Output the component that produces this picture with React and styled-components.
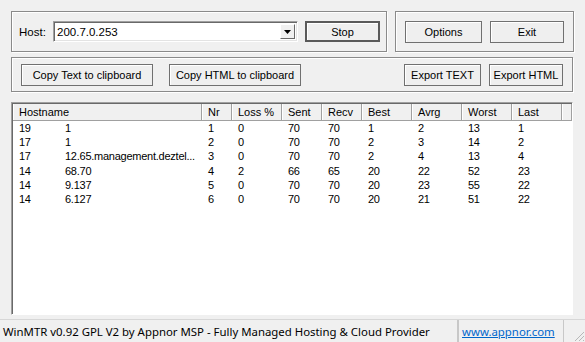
import styled, { createGlobalStyle } from "styled-components";

const GlobalStyle = createGlobalStyle`
	html, body {
		margin: 0;
		padding: 0;
		background: #f0f0f0;
	}
`;

const Window = styled.div`
	width: 585px;
	height: 342px;
	background: #f0f0f0;
	font-family: "Liberation Sans", Arial, sans-serif;
	font-size: 11px;
	color: #000;
	display: flex;
	flex-direction: column;
	overflow: hidden;
`;

const TopRow = styled.div`
	display: flex;
	gap: 8px;
	padding: 11px 11px 0 11px;
`;

const GroupBox = styled.div`
	box-sizing: border-box;
	width: ${(p) => p.$width}px;
	height: ${(p) => p.$height}px;
	border: 1px solid #8a8a8a;
	box-shadow: inset 1px 1px 0 #fff, 1px 1px 0 #fff;
	display: flex;
	align-items: center;
	padding: 0 ${(p) => p.$padRight ?? 9}px 0 ${(p) => p.$padLeft ?? 9}px;
	gap: ${(p) => p.$gap ?? 8}px;
	margin: ${(p) => p.$margin || "0"};
`;

const ButtonGroup = styled.div`
	display: flex;
	gap: 8px;
`;

const Label = styled.span`
	width: 34px;
	flex: none;
	font-size: 11.5px;
`;

const Combo = styled.div`
	box-sizing: border-box;
	width: 245px;
	height: 21px;
	flex: none;
	background: #fff;
	border-top: 1px solid #a0a0a0;
	border-left: 1px solid #a0a0a0;
	border-right: 1px solid #fff;
	border-bottom: 1px solid #fff;
	box-shadow: inset 1px 1px 0 #696969, inset -1px -1px 0 #e3e3e3;
	display: flex;
	align-items: center;
	padding: 0 2px 0 3px;
	margin-right: 7px;
`;

const ComboText = styled.span`
	flex: 1;
	font-size: 11.5px;
`;

const ArrowButton = styled.div`
	box-sizing: border-box;
	width: 15px;
	height: 15px;
	background: #f0f0f0;
	border-top: 1px solid #fff;
	border-left: 1px solid #fff;
	border-right: 1px solid #696969;
	border-bottom: 1px solid #696969;
	display: flex;
	align-items: center;
	justify-content: center;
`;

const Button = styled.button`
	box-sizing: border-box;
	width: ${(p) => p.$width}px;
	height: ${(p) => p.$height || 22}px;
	flex: none;
	padding: 0;
	margin: 0;
	background: #efefef;
	border: ${(p) => (p.$default ? "2px solid #5a5a5a" : "1px solid #707070")};
	box-shadow: inset 1px 1px 0 #fff;
	font-family: "Liberation Sans", Arial, sans-serif;
	font-size: 11px;
	color: #000;
	display: flex;
	align-items: center;
	justify-content: center;
`;

const Spacer = styled.div`
	flex: 1;
`;

const ListView = styled.div`
	box-sizing: border-box;
	width: 562px;
	height: 213px;
	margin: 10px 0 0 11px;
	background: #fff;
	border-top: 1px solid #a0a0a0;
	border-left: 1px solid #a0a0a0;
	border-right: 1px solid #fff;
	border-bottom: 1px solid #fff;
	box-shadow: inset 1px 1px 0 #696969;
	padding: 1px 0 0 1px;
`;

const HeaderRow = styled.div`
	display: flex;
	height: 17px;
`;

const HeaderCell = styled.div`
	box-sizing: border-box;
	width: ${(p) => p.$width}px;
	flex: ${(p) => (p.$fill ? 1 : "none")};
	height: 17px;
	background: #f0f0f0;
	border-right: 1px solid #a0a0a0;
	border-bottom: 1px solid #a0a0a0;
	box-shadow: inset 1px 0 0 #fff;
	padding-left: 6px;
	display: flex;
	align-items: center;
	font-size: 11px;
`;

const Row = styled.div`
	display: flex;
	height: 14.2px;
	align-items: center;
`;

const Cell = styled.div`
	box-sizing: border-box;
	width: ${(p) => p.$width}px;
	flex: none;
	padding-left: 6px;
	white-space: nowrap;
	overflow: hidden;
	font-size: 11px;
	letter-spacing: -0.25px;
	display: flex;
`;

const HostPrefix = styled.span`
	width: 46px;
	flex: none;
`;

const StatusBar = styled.div`
	margin-top: 4px;
	flex: 1;
	display: flex;
	border-top: 1px solid #d7d7d7;
	font-family: "Noto Sans", "Open Sans", sans-serif;
	font-size: 11.4px;
`;

const StatusPanel = styled.div`
	box-sizing: border-box;
	width: ${(p) => p.$width}px;
	flex: none;
	border-right: ${(p) => (p.$sep ? "1px solid #c8c8c8" : "none")};
	border-left: ${(p) => (p.$lead ? "1px solid #c8c8c8" : "none")};
	padding-left: ${(p) => p.$pad ?? 3}px;
	display: flex;
	align-items: center;
	white-space: nowrap;
`;

const Link = styled.a`
	color: #0066cc;
	text-decoration: underline;
`;

const Grip = styled.div`
	width: 14px;
	display: flex;
	align-items: flex-end;
	justify-content: flex-end;
`;

const columns = [
	{ key: "host", title: "Hostname", width: 189 },
	{ key: "nr", title: "Nr", width: 30 },
	{ key: "loss", title: "Loss %", width: 50 },
	{ key: "sent", title: "Sent", width: 40 },
	{ key: "recv", title: "Recv", width: 40 },
	{ key: "best", title: "Best", width: 50 },
	{ key: "avrg", title: "Avrg", width: 50 },
	{ key: "worst", title: "Worst", width: 50 },
	{ key: "last", title: "Last", width: 50 },
];

const rows = [
	{ pre: "19", host: "1", nr: 1, loss: 0, sent: 70, recv: 70, best: 1, avrg: 2, worst: 13, last: 1 },
	{ pre: "17", host: "1", nr: 2, loss: 0, sent: 70, recv: 70, best: 2, avrg: 3, worst: 14, last: 2 },
	{ pre: "17", host: "12.65.management.deztel...", nr: 3, loss: 0, sent: 70, recv: 70, best: 2, avrg: 4, worst: 13, last: 4 },
	{ pre: "14", host: "68.70", nr: 4, loss: 2, sent: 66, recv: 65, best: 20, avrg: 22, worst: 52, last: 23 },
	{ pre: "14", host: "9.137", nr: 5, loss: 0, sent: 70, recv: 70, best: 20, avrg: 23, worst: 55, last: 22 },
	{ pre: "14", host: "6.127", nr: 6, loss: 0, sent: 70, recv: 70, best: 20, avrg: 21, worst: 51, last: 22 },
];

export default function App() {
	return (
		<Window>
			<GlobalStyle />
			<TopRow>
				<GroupBox $width={376} $height={41} $gap={0} $padLeft={7}>
					<Label>Host:</Label>
					<Combo>
						<ComboText>200.7.0.253</ComboText>
						<ArrowButton>
							<svg width="7" height="4" viewBox="0 0 7 4">
								<path d="M0 0h7L3.5 4z" fill="#000" />
							</svg>
						</ArrowButton>
					</Combo>
					<Button $width={75} $height={21} $default>Stop</Button>
				</GroupBox>
				<GroupBox $width={179} $height={41} $padLeft={9}>
					<Button $width={77}>Options</Button>
					<Button $width={74}>Exit</Button>
				</GroupBox>
			</TopRow>
			<GroupBox $width={562} $height={35} $margin="5px 0 0 11px" $padLeft={9} $padRight={9} $gap={16}>
				<Button $width={132}>Copy Text to clipboard</Button>
				<Button $width={132}>Copy HTML to clipboard</Button>
				<Spacer />
				<ButtonGroup>
					<Button $width={77}>Export TEXT</Button>
					<Button $width={74}>Export HTML</Button>
				</ButtonGroup>
			</GroupBox>
			<ListView>
				<HeaderRow>
					{columns.map((c) => (
						<HeaderCell key={c.key} $width={c.width}>{c.title}</HeaderCell>
					))}
					<HeaderCell $fill />
				</HeaderRow>
				{rows.map((r) => (
					<Row key={r.nr}>
						<Cell $width={189}>
							<HostPrefix>{r.pre}</HostPrefix>
							<span>{r.host}</span>
						</Cell>
						{columns.slice(1).map((c) => (
							<Cell key={c.key} $width={c.width}>{r[c.key]}</Cell>
						))}
					</Row>
				))}
			</ListView>
			<StatusBar>
				<StatusPanel $width={458} $sep $pad={3}>
					WinMTR v0.92 GPL V2 by Appnor MSP - Fully Managed Hosting &amp; Cloud Provider
				</StatusPanel>
				<StatusPanel $width={106} $sep $lead $pad={3}>
					<Link href="#">www.appnor.com</Link>
				</StatusPanel>
				<Spacer />
				<Grip>
					<svg width="12" height="12" viewBox="0 0 12 12">
						<path d="M11 2L2 11M11 6L6 11M11 10L10 11" stroke="#b8b8b8" strokeWidth="1" />
					</svg>
				</Grip>
			</StatusBar>
		</Window>
	);
}
